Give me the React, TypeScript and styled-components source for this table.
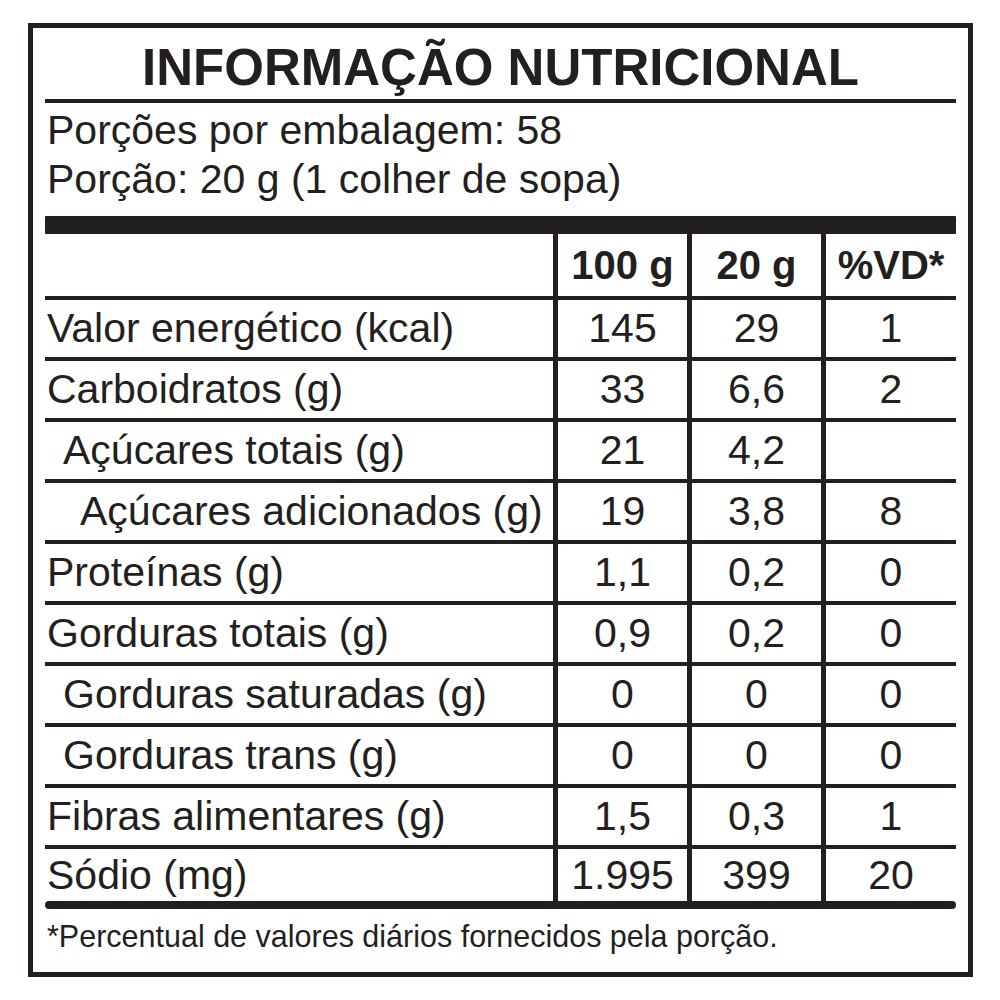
import styled, { createGlobalStyle } from 'styled-components';

const INK = '#231f20';

const GlobalStyle = createGlobalStyle`
    html, body {
        margin: 0;
        padding: 0;
        background: #ffffff;
    }
    body {
        font-family: "Liberation Sans", Arial, Helvetica, sans-serif;
        color: ${INK};
    }
`;

const Page = styled.div`
    width: 1000px;
    height: 1000px;
    padding: 23px 0 0 28px;
    box-sizing: border-box;
`;

const Frame = styled.div`
    width: 945px;
    height: 954px;
    border: 5px solid ${INK};
    box-sizing: border-box;
    padding: 0 12px;
    display: flex;
    flex-direction: column;
`;

const Title = styled.h1`
    margin: 0;
    padding-top: 4px;
    height: 75px;
    box-sizing: border-box;
    line-height: 71px;
    font-size: 51px;
    font-weight: bold;
    text-align: center;
    white-space: nowrap;
    border-bottom: 4px solid ${INK};
`;

const Serving = styled.div`
    padding: 3px 0 12px 2px;
    font-size: 41px;
    line-height: 49px;
    white-space: nowrap;
`;

const ThickBar = styled.div<{ $height: number }>`
    height: ${props => props.$height}px;
    background: ${INK};
    border-radius: ${props => (props.$height > 10 ? 1 : 4)}px;
`;

const Table = styled.div`
    display: flex;
    flex-direction: column;
`;

const Row = styled.div<{ $height: number; $last?: boolean }>`
    display: grid;
    grid-template-columns: 508px 134px 134px 135px;
    height: ${props => props.$height}px;
    box-sizing: border-box;
    border-bottom: ${props => (props.$last ? 'none' : `4px solid ${INK}`)};
`;

const LabelCell = styled.div<{ $indent: number }>`
    display: flex;
    align-items: center;
    padding-left: ${props => [2, 18, 35][props.$indent]}px;
    font-size: 41px;
    white-space: nowrap;
`;

const ValueCell = styled.div<{ $bold?: boolean }>`
    display: flex;
    align-items: center;
    justify-content: center;
    border-left: 5px solid ${INK};
    font-size: ${props => (props.$bold ? 40 : 41)}px;
    font-weight: ${props => (props.$bold ? 'bold' : 'normal')};
    white-space: nowrap;
`;

const Footer = styled.div`
    padding: 9px 0 0 2px;
    font-size: 30.5px;
    line-height: 36px;
    white-space: nowrap;
`;

type Nutrient = {
    label: string;
    per100: string;
    perPortion: string;
    vd: string;
    indent: number;
};

const nutrients: Nutrient[] = [
    { label: 'Valor energético (kcal)', per100: '145', perPortion: '29', vd: '1', indent: 0 },
    { label: 'Carboidratos (g)', per100: '33', perPortion: '6,6', vd: '2', indent: 0 },
    { label: 'Açúcares totais (g)', per100: '21', perPortion: '4,2', vd: '', indent: 1 },
    { label: 'Açúcares adicionados (g)', per100: '19', perPortion: '3,8', vd: '8', indent: 2 },
    { label: 'Proteínas (g)', per100: '1,1', perPortion: '0,2', vd: '0', indent: 0 },
    { label: 'Gorduras totais (g)', per100: '0,9', perPortion: '0,2', vd: '0', indent: 0 },
    { label: 'Gorduras saturadas (g)', per100: '0', perPortion: '0', vd: '0', indent: 1 },
    { label: 'Gorduras trans (g)', per100: '0', perPortion: '0', vd: '0', indent: 1 },
    { label: 'Fibras alimentares (g)', per100: '1,5', perPortion: '0,3', vd: '1', indent: 0 },
    { label: 'Sódio (mg)', per100: '1.995', perPortion: '399', vd: '20', indent: 0 },
];

export default function App(): JSX.Element {
    return (
        <Page>
            <GlobalStyle />
            <Frame>
                <Title>INFORMAÇÃO NUTRICIONAL</Title>
                <Serving>
                    <div>Porções por embalagem: 58</div>
                    <div>Porção: 20 g (1 colher de sopa)</div>
                </Serving>
                <ThickBar $height={18} />
                <Table>
                    <Row $height={66}>
                        <LabelCell $indent={0} />
                        <ValueCell $bold>100 g</ValueCell>
                        <ValueCell $bold>20 g</ValueCell>
                        <ValueCell $bold>%VD*</ValueCell>
                    </Row>
                    {nutrients.map((n, i) => {
                        const last = i === nutrients.length - 1;
                        return (
                            <Row key={n.label} $height={last ? 52 : 61} $last={last}>
                                <LabelCell $indent={n.indent}>{n.label}</LabelCell>
                                <ValueCell>{n.per100}</ValueCell>
                                <ValueCell>{n.perPortion}</ValueCell>
                                <ValueCell>{n.vd}</ValueCell>
                            </Row>
                        );
                    })}
                </Table>
                <ThickBar $height={8} />
                <Footer>*Percentual de valores diários fornecidos pela porção.</Footer>
            </Frame>
        </Page>
    );
}
